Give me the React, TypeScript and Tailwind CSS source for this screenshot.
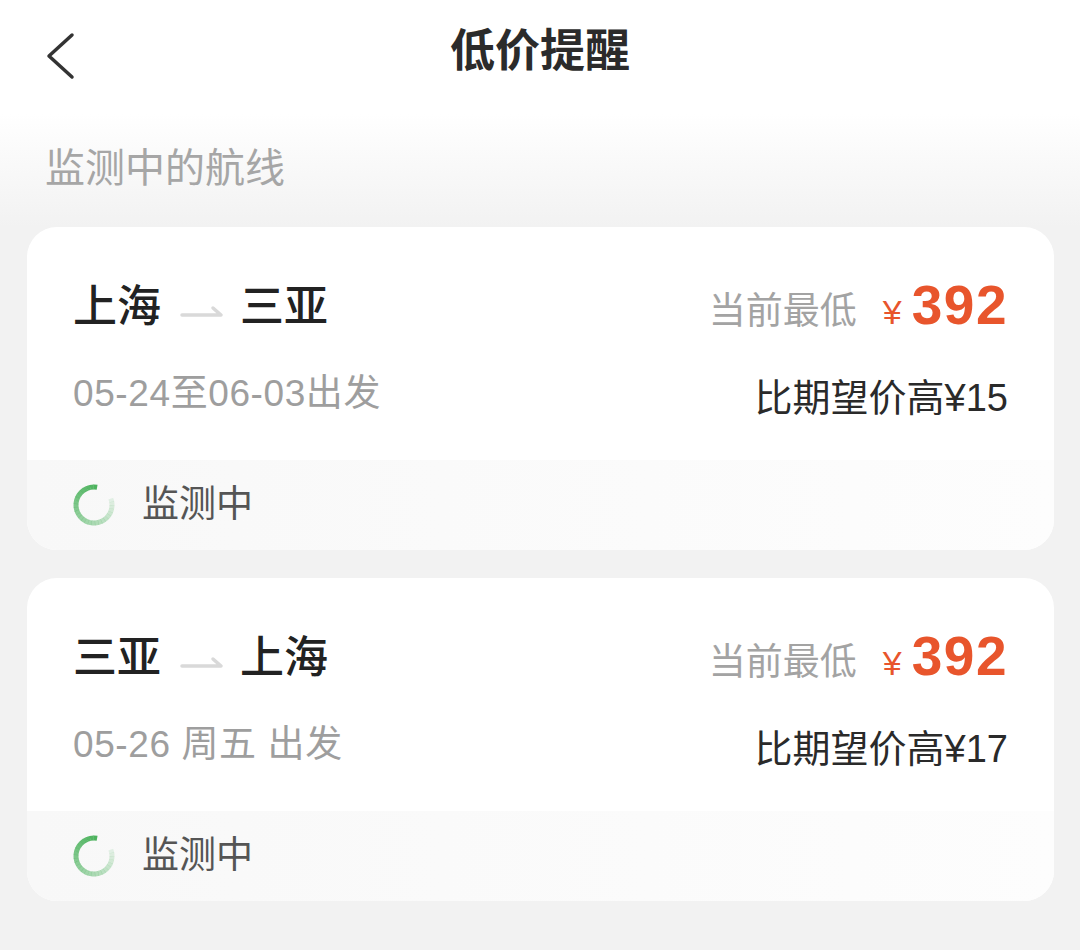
import React from 'react';

const FONT = { fontFamily: '"Liberation Sans", "Noto Sans CJK SC", sans-serif' };

const Spinner = () => {
  const segs = 28;
  const r = 18;
  const cx = 22;
  const cy = 22;
  const total = 300; // degrees of arc drawn
  const start = -80; // start near top, going counter-clockwise to fade
  return (
    <svg width="44" height="44" viewBox="0 0 44 44">
      {Array.from({ length: segs }).map((_, i) => {
        const a1 = ((start - (i * total) / segs) * Math.PI) / 180;
        const a2 = ((start - ((i + 1) * total) / segs - 1) * Math.PI) / 180;
        const x1 = cx + r * Math.cos(a1);
        const y1 = cy + r * Math.sin(a1);
        const x2 = cx + r * Math.cos(a2);
        const y2 = cy + r * Math.sin(a2);
        const op = 1 - (i / segs) * 0.9;
        return (
          <path
            key={i}
            d={`M${x1} ${y1} A${r} ${r} 0 0 0 ${x2} ${y2}`}
            stroke="#4db35e"
            strokeOpacity={op}
            strokeWidth="5"
            fill="none"
          />
        );
      })}
    </svg>
  );
};

const RouteArrow = () => (
  <svg width="44" height="14" viewBox="0 0 44 14" className="ml-[19px] mr-[16px] mt-[8px]">
    <path d="M2 11 H41 L33 4" stroke="#d9d9d9" strokeWidth="3.5" fill="none" strokeLinecap="round" strokeLinejoin="round" />
  </svg>
);

type Route = { from: string; to: string; date: string; diff: string };

const routes: Route[] = [
  { from: '上海', to: '三亚', date: '05-24至06-03出发', diff: '比期望价高¥15' },
  { from: '三亚', to: '上海', date: '05-26 周五 出发', diff: '比期望价高¥17' },
];

const RouteCard = ({ r }: { r: Route }) => (
  <div className="rounded-[30px] bg-white overflow-hidden">
    <div className="px-[46px] pt-[50px] pb-[40px]">
      {/* route + price */}
      <div className="flex items-center justify-between h-[60px]">
        <div className="flex items-center text-[44px] font-medium text-[#222]">
          <span>{r.from}</span>
          <RouteArrow />
          <span>{r.to}</span>
        </div>
        <div className="flex items-baseline mt-[4px]">
          <span className="text-[37px] text-[#a3a3a3] mr-[26px]">当前最低</span>
          <span className="text-[34px] text-[#e8552c] mr-[10px]">¥</span>
          <span className="text-[55px] font-bold text-[#e8552c] leading-none tracking-[1.5px]">392</span>
        </div>
      </div>
      {/* date + diff */}
      <div className="flex items-end justify-between h-[50px] mt-[33px]">
        <span className="text-[37px] text-[#9e9e9e] leading-[44px] mb-[4px] tracking-[0.6px]">{r.date}</span>
        <span className="text-[38px] text-[#2a2a2a] leading-[44px]">{r.diff}</span>
      </div>
    </div>
    <div className="h-[90px] flex items-center px-[45px] bg-gradient-to-r from-[#f8f8f8] to-[#fdfdfd]">
      <Spinner />
      <span className="ml-[26px] text-[37px] text-[#555]">监测中</span>
    </div>
  </div>
);

export default function App() {
  return (
    <div style={FONT} className="w-[1080px] h-[950px] bg-[#f2f2f2] overflow-hidden">
      <div className="bg-gradient-to-b from-white via-white to-[#f2f2f2]">
        {/* header */}
        <div className="relative h-[104px] flex items-center justify-center">
          <svg width="30" height="48" viewBox="0 0 30 48" className="absolute left-[45px] top-[32px]">
            <polyline points="27,3 4,24 27,45" stroke="#333" strokeWidth="3.5" fill="none" strokeLinecap="round" strokeLinejoin="round" />
          </svg>
          <h1 className="text-[45px] font-bold text-[#2b2b2b]">低价提醒</h1>
        </div>
        <div className="px-[45px] pt-[40px] pb-[35px]">
          <div className="text-[40px] leading-[48px] text-[#a6a6a6]">监测中的航线</div>
        </div>
      </div>
      <div className="px-[27px] flex flex-col gap-[28px] w-[1081px]">
        {routes.map((r) => (
          <RouteCard key={r.from + r.to} r={r} />
        ))}
      </div>
    </div>
  );
}
